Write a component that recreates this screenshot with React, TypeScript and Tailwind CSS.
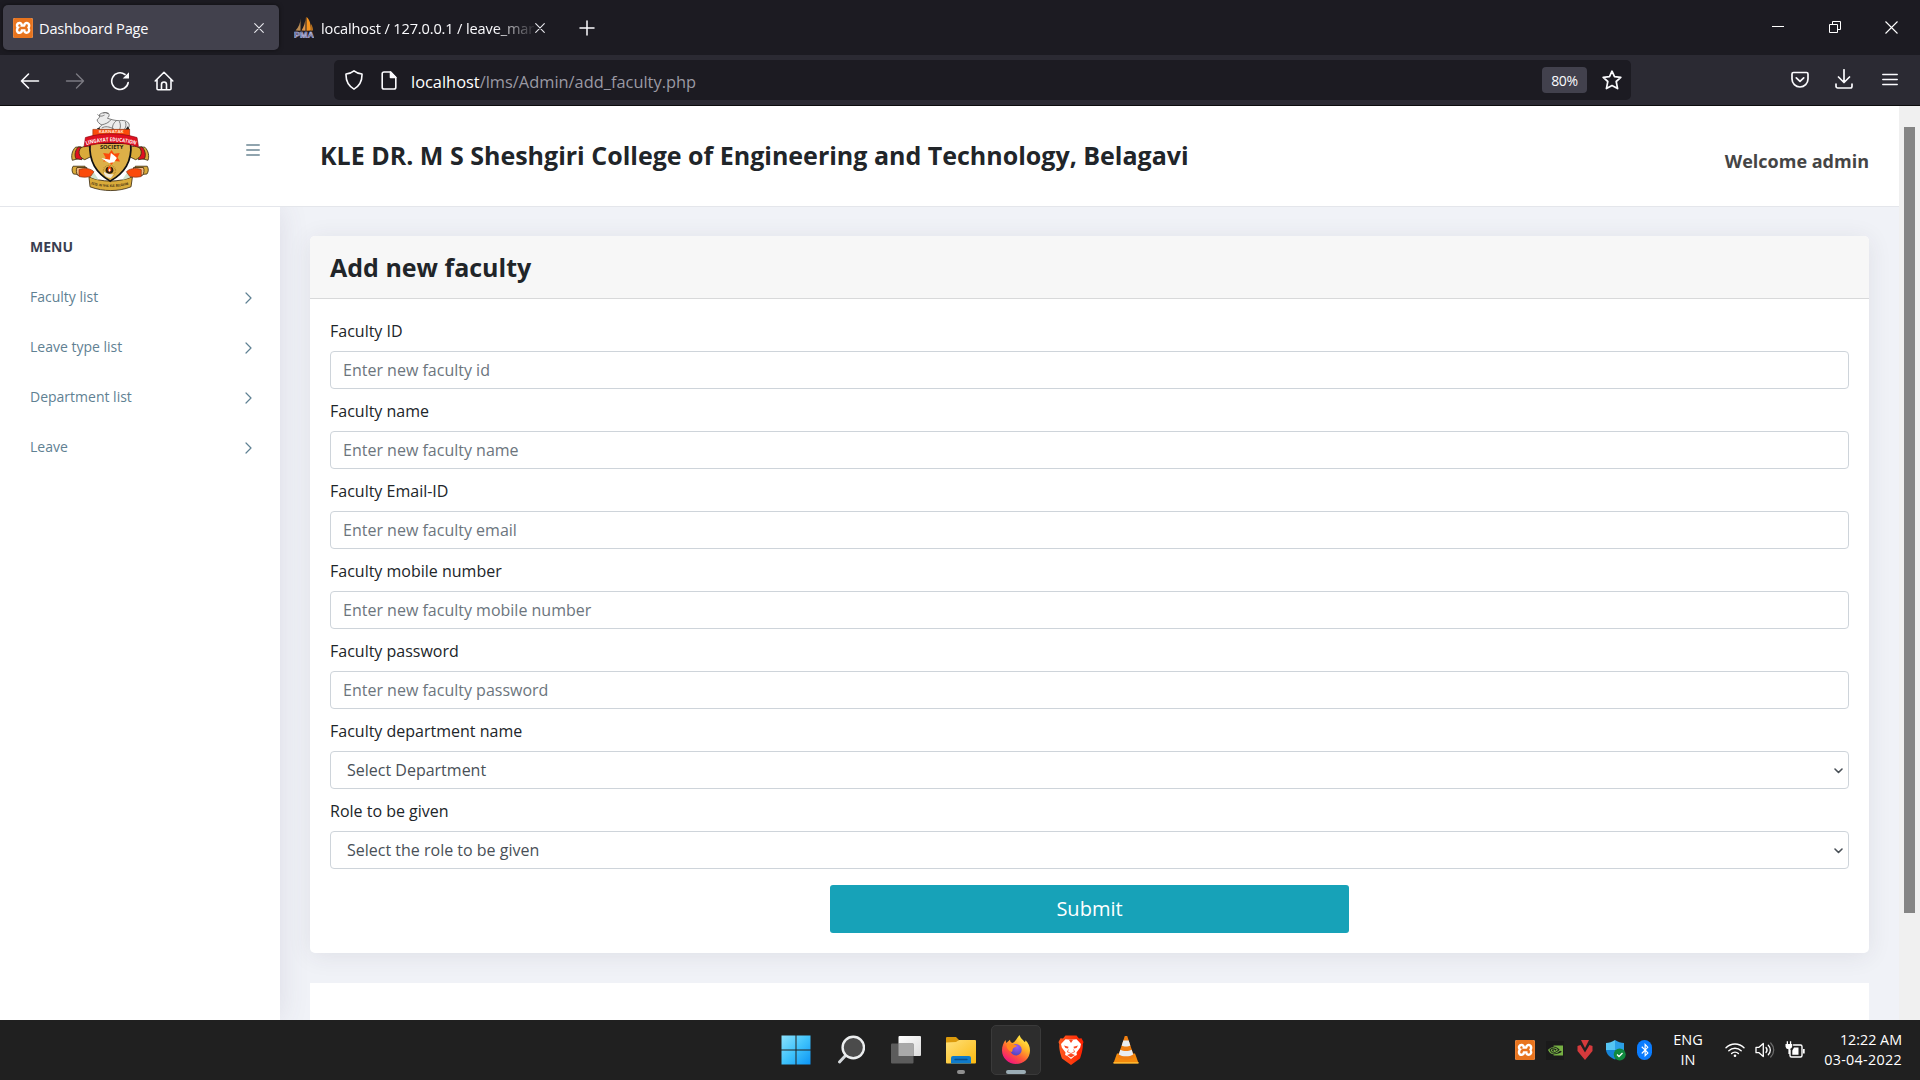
import React from "react";
import { SiXampp, SiNvidia } from "react-icons/si";
import { FaBluetoothB } from "react-icons/fa";

const stroke = {
  fill: "none",
  stroke: "currentColor",
  strokeLinecap: "round" as const,
  strokeLinejoin: "round" as const,
};

function Xampp() {
  return (
    <span className="flex h-[20px] w-[20px] shrink-0 items-center justify-center rounded-[2px] bg-white">
      <SiXampp size={20} color="#e8741e" />
    </span>
  );
}

function PhpMyAdmin() {
  return (
    <svg width="20" height="21" viewBox="0 0 20 21" className="shrink-0">
      <path d="M6.500 1.500C6.500 6 4.500 10.500 1.500 13.500l5 .2z" fill="#b98a52" />
      <path d="M11.500 0c0 5-1.500 10-4 13.500l4 .2z" fill="#d9924a" />
      <path d="M12.500 0c3.500 2.500 4.500 8.500 4.300 13.500l-4.300.2z" fill="#f7941e" />
      <path d="M17.300 7c1 2 1.500 4.500 1.400 6.500l-1.400.2z" fill="#f7941e" />
      <text x="0" y="20.500" fontSize="9" fontWeight="700" fill="#33356b" stroke="#c3c5e8" strokeWidth=".6" textLength="20" lengthAdjust="spacingAndGlyphs" fontFamily="Liberation Sans, sans-serif">
        PMA
      </text>
    </svg>
  );
}

function TabClose() {
  return (
    <svg width="10" height="10" viewBox="0 0 10 10" {...stroke} strokeWidth="1.1" className="shrink-0 text-[#e8e8ee]">
      <path d="M.7.7l8.600 8.600M9.300.7L.7 9.300" />
    </svg>
  );
}

function TabBar() {
  return (
    <div className="flex h-[55px] items-start bg-[#1c1b22] pt-[5px] pl-[3px] text-[#fbfbfe]">
      <div className="flex h-[45px] w-[276px] items-center rounded-[5px] bg-[#42414d] pl-[10px] shadow-[0_0_4px_rgba(0,0,0,0.5)]">
        <Xampp />
        <span className="ml-[6px] w-[215px] pt-[2px] text-[14.600px] tracking-[-0.200px]">Dashboard Page</span>
        <TabClose />
      </div>
      <div className="flex h-[45px] items-center pl-[15px]">
        <PhpMyAdmin />
        <span className="ml-[7px] w-[214px] pt-[2px] text-[14.600px] tracking-[-0.150px] whitespace-nowrap [mask-image:linear-gradient(to_right,black_81%,transparent_101%)]">
          localhost / 127.0.0.1 / leave_mar
        </span>
        <TabClose />
        <svg width="16" height="16" viewBox="0 0 16 16" {...stroke} strokeWidth="1.500" className="ml-[34px]">
          <path d="M8 1v14M1 8h14" />
        </svg>
      </div>
      <div className="mt-[14px] mr-[22px] ml-auto flex h-[16px] items-center">
        <svg width="12" height="12" viewBox="0 0 12 12" stroke="#fff">
          <path d="M0 5.500h12" />
        </svg>
        <svg width="12" height="12" viewBox="0 0 12 12" stroke="#fff" fill="none" className="ml-[45px]">
          <path d="M.5 3.500h8v8h-8zM3.500 3.500v-3h8v8h-3" />
        </svg>
        <svg width="13" height="13" viewBox="0 0 13 13" stroke="#fff" fill="none" className="ml-[44px]">
          <path d="M.5.5l12 12M12.500.5l-12 12" strokeWidth="1.100" />
        </svg>
      </div>
    </div>
  );
}

function Toolbar() {
  return (
    <div className="flex h-[51px] items-center border-b border-[#0c0c0d] bg-[#2b2a33] text-[#fbfbfe]">
      <div className="flex w-[334px] items-center pt-[1px] pl-[20px]">
        <svg width="20" height="20" viewBox="0 0 20 20" {...stroke} strokeWidth="1.600">
          <path d="M18.500 10H1.500M8.500 3l-7 7 7 7" />
        </svg>
        <svg width="20" height="20" viewBox="0 0 20 20" {...stroke} strokeWidth="1.400" className="ml-[25px] text-[#7b7a82]">
          <path d="M1.500 10h17M11.500 3l7 7-7 7" />
        </svg>
        <svg width="20" height="20" viewBox="0 0 20 20" {...stroke} strokeWidth="1.600" className="ml-[25px]">
          <path d="M18.200 11.500A8.300 8.300 0 1 1 15 3.500" />
          <path d="M19 1.200v6.300h-6.300z" fill="currentColor" stroke="none" />
        </svg>
        <svg width="20" height="20" viewBox="0 0 20 20" {...stroke} strokeWidth="1.600" className="ml-[24px]">
          <path d="M1.200 10L10 1.300 18.800 10M3 8.500v9.200a1 1 0 0 0 1 1h12a1 1 0 0 0 1-1V8.500M7.500 18.500v-5a2.500 2.500 0 0 1 5 0v5" />
        </svg>
      </div>
      <div className="flex h-[40px] w-[1297px] items-center rounded-[5px] bg-[#1c1b22] pl-[11px]">
        <svg width="18" height="20" viewBox="0 0 18 20" {...stroke} strokeWidth="1.600">
          <path d="M9 .9c2.300 1.900 4.800 2.900 8 3.100.2 6-1.500 11.500-8 15.100C2.500 15.500.8 10 1 4c3.200-.2 5.700-1.200 8-3.100z" />
        </svg>
        <svg width="16" height="19" viewBox="0 0 16 19" {...stroke} strokeWidth="1.600" className="ml-[18px]">
          <path d="M9.500 1H3a1.800 1.800 0 0 0-1.800 1.800v13.400A1.800 1.800 0 0 0 3 18h10a1.800 1.800 0 0 0 1.800-1.800V6.500z" />
          <path d="M9.500 1v5.500h5.300z" fill="currentColor" />
        </svg>
        <span className="ml-[14px] pt-[4px] text-[16.400px] text-[#9a99a3]">
          <span className="text-white">localhost</span>/lms/Admin/add_faculty.php
        </span>
        <span className="ml-auto flex h-[26px] w-[45px] items-center justify-center rounded-[4px] bg-[#42414d] pt-[1px] text-[14px] tracking-[-0.300px]">
          80%
        </span>
        <svg width="20" height="20" viewBox="0 0 20 20" {...stroke} strokeWidth="1.700" className="mr-[9px] ml-[15px]">
          <path d="M10 1.200l2.500 5.500 6.300.7-4.600 4.100 1.400 7.100L10 15.500l-5.600 3.100 1.400-7.100L1.200 7.400l6.300-.7z" />
        </svg>
      </div>
      <div className="mr-[22px] ml-auto flex items-center">
        <svg width="18" height="18" viewBox="0 0 18 18" {...stroke} strokeWidth="1.700">
          <path d="M2.500 1.500h13A1.500 1.500 0 0 1 17 3v5a8 8 0 0 1-16 0V3a1.500 1.500 0 0 1 1.500-1.500zM5.300 6.800L9 10.300l3.700-3.500" />
        </svg>
        <svg width="18" height="20" viewBox="0 0 18 20" {...stroke} strokeWidth="1.700" className="mb-[2px] ml-[26px]">
          <path d="M9 .8V13M3.500 8L9 13.500 14.500 8M1 15v2.300A1.700 1.700 0 0 0 2.700 19h12.600a1.700 1.700 0 0 0 1.700-1.700V15" />
        </svg>
        <svg width="16" height="14" viewBox="0 0 16 14" {...stroke} strokeWidth="1.500" className="mb-[2px] ml-[29px]">
          <path d="M.8 2.500h14.400M.8 7.500h14.400M.8 12.500h14.400" />
        </svg>
      </div>
    </div>
  );
}

function Crest() {
  return (
    <svg width="106" height="88" viewBox="0 1 300 282" preserveAspectRatio="none" fontFamily="Open Sans, sans-serif">
      <g fill="#ececec" stroke="#666" strokeWidth="2.500">
        <path d="M112 78c-3-8 2-12 6-16-6-4-13-10-13-17 6-5 8-9 7-17 7-6 15-8 25-4 4 6 2 12-3 16 10 4 21 8 34 8 16-3 28 4 28 15 0 8-5 13-10 15z" />
        <path d="M106 28c6 8 14 6 20 2M136 26c-5-4-10-5-14-2M117 62c12-4 20-6 28-18M150 78c-4-12 2-24 10-30M168 50c4 10 4 20 0 28M185 52c3 8 2 17-3 24M118 72c10-8 22-4 34 2" fill="none" />
      </g>
      <path d="M104 72l9-2-2 8zM192 66l6 12h-14z" fill="#222" />
      <g stroke="#3b2a10" strokeWidth="2.500">
        <path d="M44 133l16-1-3 36-22 7c-4-12-2-30 9-42z" fill="#d9ab3a" />
        <path d="M52 132l17 3-7 38-17-3c-5-12-2-28 7-38z" fill="#e01020" />
        <path d="M58 136c15-11 28-4 35 3l-5 24-18 10c-14-6-21-22-12-37z" fill="#d9ab3a" />
        <path d="M240 133l-16-1 3 36 22 7c4-12 2-30-9-42z" fill="#d9ab3a" />
        <path d="M232 132l-17 3 7 38 17-3c5-12 2-28-7-38z" fill="#e01020" />
        <path d="M226 136c-15-11-28-4-35 3l5 24 18 10c14-6 21-22 12-37z" fill="#d9ab3a" />
        <path d="M37 194h34v28l-33-3c-5-8-5-17-1-25z" fill="#d9ab3a" />
        <path d="M48 198h28v29l-26-4c-4-8-5-17-2-25z" fill="#f5bd87" />
        <path d="M247 194h-34v28l33-3c5-8 5-17 1-25z" fill="#d9ab3a" />
        <path d="M236 198h-28v29l26-4c4-8 5-17 2-25z" fill="#f5bd87" />
        <path d="M82 228l3 32c38 16 80 16 116 0l4-32c-38 18-88 18-123 0z" fill="#d9ab3a" />
      </g>
      <path d="M82 226c6 4 18 10 28 12l-14-24zM204 226c-6 4-18 10-28 12l14-24z" fill="#cfe3cf" />
      <path d="M85 120h115c5 60-18 95-58 122C103 215 81 180 85 120z" fill="#ddb048" stroke="#111" strokeWidth="5" />
      <path d="M54 205c18-7 35-3 42 7l-9 14c-10 4-22 4-33 1z" fill="#fb4b0b" stroke="#803010" strokeWidth="2" />
      <path d="M230 205c-18-7-35-3-42 7l9 14c10 4 22 4 33 1z" fill="#fb4b0b" stroke="#803010" strokeWidth="2" />
      <path d="M93 76h104v22H93z" fill="#fb4b0b" stroke="#a33208" strokeWidth="2" />
      <text x="145" y="89" fontSize="10" fontWeight="700" fill="#ffe2c8" textAnchor="middle" textLength="70" lengthAdjust="spacingAndGlyphs">
        KARNATAK
      </text>
      <path d="M72 102c46-16 98-16 146 0l4 30c-48-17-106-17-154 0z" fill="#e01020" stroke="#8a0a12" strokeWidth="2" />
      <path id="ribbon" d="M75 126c44-16 98-16 144 1" fill="none" />
      <text fontSize="17" fontWeight="700" fill="#fff">
        <textPath href="#ribbon" textLength="142" lengthAdjust="spacingAndGlyphs">
          LINGAYAT EDUCATION
        </textPath>
      </text>
      <text x="146" y="140" fontSize="14" fontWeight="700" fill="#26200c" textAnchor="middle" textLength="66" lengthAdjust="spacingAndGlyphs">
        SOCIETY
      </text>
      <path d="M146 142l7 12 16-2-6 14 7 13-16-2-8 13-8-13-16 2 7-13-7-14 16 2z" fill="#fb4b0b" />
      <path d="M117 168l24 5 3-21 12 10 5 6-8 13-14 3-10-7z" fill="#fff" />
      <circle cx="140" cy="208" r="17" fill="none" stroke="#a37c22" strokeWidth="4" strokeDasharray="2 3" />
      <circle cx="140" cy="207" r="11" fill="#2b1d0e" />
      <path d="M140 192c8 10 7 18 0 20-7-2-7-10 0-20z" fill="#fb4b0b" />
      <path d="M140 201c4 5 3 9 0 10-3-1-3-5 0-10z" fill="#fff" />
      <path d="M124 212c10 8 18 8 28 8l-8 12c-12-1-20-8-20-20z" fill="#f3ead8" />
      <path id="motto" d="M88 252c36 12 76 12 110-1" fill="none" />
      <text fontSize="11" fontWeight="700" fill="#3b2a10">
        <textPath href="#motto" textLength="108" lengthAdjust="spacingAndGlyphs">
          ESTD. IN 1916. KLE. BELGAUM
        </textPath>
      </text>
    </svg>
  );
}

function Header() {
  return (
    <header className="flex h-[101px] shrink-0 border-b border-[#e4e6eb] bg-white">
      <div className="flex w-[280px] pl-[60px]">
        <Crest />
        <svg width="14" height="12" viewBox="0 0 14 12" className="mt-[38px] ml-[80px]" stroke="#90a4ae" strokeWidth="2" strokeLinecap="round">
          <path d="M1 1h12M1 6h12M1 11h12" />
        </svg>
      </div>
      <h1 className="mt-[33px] ml-[40px] text-[25px] leading-[32px] font-bold text-[#212529]">
        KLE DR. M S Sheshgiri College of Engineering and Technology, Belagavi
      </h1>
      <div className="mt-[43px] mr-[30px] ml-auto text-[18px] leading-[24px] font-bold text-[#454545]">Welcome admin</div>
    </header>
  );
}

const menu = ["Faculty list", "Leave type list", "Department list", "Leave"];

function Sidebar() {
  return (
    <nav className="z-10 w-[280px] shrink-0 bg-white pt-[14px] pl-[30px] text-[14px] shadow-[0_0_28px_rgba(82,63,105,0.12)]">
      <div className="flex h-[50px] items-center font-bold text-[#3a3f51]">MENU</div>
      {menu.map((item) => (
        <a key={item} className="flex h-[50px] items-center justify-between pr-[28px] text-[#5f8193]">
          {item}
          <svg width="7" height="12" viewBox="0 0 7 12" {...stroke} strokeWidth="1.200" className="mt-[4px]">
            <path d="M1 1l5 5-5 5" />
          </svg>
        </a>
      ))}
    </nav>
  );
}

const fields = [
  ["Faculty ID", "Enter new faculty id"],
  ["Faculty name", "Enter new faculty name"],
  ["Faculty Email-ID", "Enter new faculty email"],
  ["Faculty mobile number", "Enter new faculty mobile number"],
  ["Faculty password", "Enter new faculty password"],
];

const selects = [
  ["Faculty department name", "Select Department"],
  ["Role to be given", "Select the role to be given"],
];

function FacultyForm() {
  return (
    <section className="h-[717px] shrink-0 rounded-[5px] bg-white text-[16px] text-[#212529] shadow-[0_3px_24px_rgba(50,40,70,0.090)]">
      <div className="h-[63px] rounded-t-[5px] border-b border-[#d8d9da] bg-[#f7f7f7] px-[20px] pt-[15px]">
        <h2 className="text-[25px] leading-[32px] font-bold">Add new faculty</h2>
      </div>
      <form className="flex flex-col px-[20px] pt-[20px]">
        {fields.map(([label, hint]) => (
          <div key={label} className="h-[80px]">
            <label className="block h-[32px] leading-[24px]">{label}</label>
            <input
              placeholder={hint}
              className="block h-[38px] w-full rounded-[4px] border border-[#ced4da] px-[12px] leading-[24px] placeholder:text-[#6c757d]"
            />
          </div>
        ))}
        {selects.map(([label, value]) => (
          <div key={label} className="h-[80px]">
            <label className="block h-[32px] leading-[24px]">{label}</label>
            <button type="button" className="flex h-[38px] w-full items-center justify-between rounded-[4px] border border-[#ced4da] pr-[5px] pl-[16px] text-[#495057]">
              {value}
              <svg width="9" height="6" viewBox="0 0 9 6" {...stroke} strokeWidth="1.600" className="mt-[1px]">
                <path d="M1 1l3.500 3.500L8 1" />
              </svg>
            </button>
          </div>
        ))}
        <button type="button" className="mt-[6px] h-[48px] w-[519px] self-center rounded-[3px] bg-[#17a2b8] text-[20px] text-white">
          Submit
        </button>
      </form>
    </section>
  );
}

function TaskIcon({ children, active, bar }: { children: React.ReactNode; active?: boolean; bar?: string }) {
  return (
    <div className={active ? "flex h-[50px] w-[50px] flex-col items-center rounded-[5px] border border-[#3a3a3a] bg-[#2d2d2d]" : "flex h-[50px] w-[50px] flex-col items-center border border-transparent"}>
      <div className="flex h-[44px] items-center pt-[4px]">{children}</div>
      {bar && <div className={bar} />}
    </div>
  );
}

function Taskbar() {
  return (
    <footer className="flex h-[60px] bg-[#202020] text-[#fff]">
      <div className="flex w-[1490px] gap-[5px] pt-[5px] pl-[771px]">
        <TaskIcon>
          <svg width="30" height="30" viewBox="0 0 30 30" className="-ml-[1px]">
            <defs>
              <linearGradient id="win" x1="0" y1="0" x2="30" y2="30" gradientUnits="userSpaceOnUse">
                <stop stopColor="#8fe3fd" />
                <stop offset=".5" stopColor="#40c3fb" />
                <stop offset="1" stopColor="#0a93f5" />
              </linearGradient>
            </defs>
            <path d="M.5.5h14v14H.5zM15.500.5h14v14h-14zM.5 15.500h14v14H.5zM15.500 15.500h14v14h-14z" fill="url(#win)" />
          </svg>
        </TaskIcon>
        <TaskIcon>
          <svg width="28" height="30" viewBox="0 0 28 30" className="-ml-[1px]">
            <path d="M9.500 19.500L2.500 27" stroke="#d5d9dc" strokeWidth="3" strokeLinecap="round" />
            <circle cx="16.300" cy="12.500" r="10.700" fill="#4b4b4b" stroke="#eceeef" strokeWidth="2.400" />
          </svg>
        </TaskIcon>
        <TaskIcon>
          <svg width="32" height="30" viewBox="0 0 32 30">
            <defs>
              <linearGradient id="pane" x1="0" y1="0" x2="1" y2="1">
                <stop stopColor="#fff" />
                <stop offset="1" stopColor="#dcdcdc" />
              </linearGradient>
            </defs>
            <rect x="8.500" y="1" width="22.500" height="20" rx="1" fill="url(#pane)" />
            <rect x="1" y="8.500" width="22.500" height="20" rx="1" fill="#5c5c5c" />
            <path d="M8.500 8.500h15V21h-15z" fill="#a9a9a9" />
          </svg>
        </TaskIcon>
        <TaskIcon bar="h-[4px] w-[8px] rounded-full bg-[#8f8f8f]">
          <svg width="32" height="30" viewBox="0 0 32 30">
            <defs>
              <linearGradient id="folder" x1="0" y1="0" x2="1" y2="1">
                <stop stopColor="#ffe07a" />
                <stop offset="1" stopColor="#fbb90f" />
              </linearGradient>
            </defs>
            <path d="M1 3a1 1 0 0 1 1-1h9l3 3-2 4H1z" fill="#dc9a0c" />
            <path d="M1 7.500l10-.5 3-2h16a1 1 0 0 1 1 1v21.500a1 1 0 0 1-1 1H2a1 1 0 0 1-1-1z" fill="url(#folder)" />
            <path d="M6 28.500V23a2 2 0 0 1 2-2h16a2 2 0 0 1 2 2v5.500z" fill="#0f7bcb" />
            <path d="M10 24.500h12" stroke="#0a4f8c" strokeWidth="1.300" strokeLinecap="round" />
          </svg>
        </TaskIcon>
        <TaskIcon active bar="h-[4px] w-[20px] rounded-full bg-[#9badb5]">
          <svg width="30" height="30" viewBox="0 0 30 30">
            <defs>
              <linearGradient id="fox" x1="24" y1="2" x2="7" y2="27" gradientUnits="userSpaceOnUse">
                <stop stopColor="#fff14a" />
                <stop offset=".35" stopColor="#ffb027" />
                <stop offset=".65" stopColor="#ff5a35" />
                <stop offset="1" stopColor="#f0147f" />
              </linearGradient>
              <radialGradient id="globe" cx=".6" cy=".25" r=".8">
                <stop stopColor="#9a5af5" />
                <stop offset="1" stopColor="#4b45b8" />
              </radialGradient>
            </defs>
            <path d="M18.500 0c1 3.500 3.500 4.500 5 7 .7-.3 1-.8 1-1.800 3 3 4.500 6.500 4.500 10.300C29 23.300 22.700 29 15 29S1 23 1 15.500c0-4 1.300-7.500 3.500-10.500l.8 3 3.700-3.300c.2 1.800 1 2.800 2.300 3.300 3-.8 4.200-4.500 7.200-8z" fill="url(#fox)" />
            <circle cx="15" cy="14.800" r="5.700" fill="url(#globe)" />
            <path d="M5.500 9.500c3-1.500 5-1 6.500 0 1.800.2 3 .5 4 1.500-1 1.500-3 1.300-4 2.500-.7 1-.2 2.500-1.200 3.500C7.500 16 5.500 13 5.500 9.500z" fill="#ff8a1e" />
          </svg>
        </TaskIcon>
        <TaskIcon>
          <svg width="28" height="32" viewBox="0 0 28 32">
            <defs>
              <linearGradient id="brave">
                <stop stopColor="#ff5a1f" />
                <stop offset="1" stopColor="#ff2000" />
              </linearGradient>
            </defs>
            <path d="M8.500 1.500h11l2.500 3 2.500-.3 2 3.800-.8 2.500c.5 3-1 9.500-2.700 14L14 31l-9-6.500C3.300 20 1.800 13.500 2.300 10.500L1.500 8l2-3.800 2.500.3z" fill="url(#brave)" />
            <path d="M14 5.800l5.500-.6L24 10l-.8 3.500-3.700 5 .4 2.500-2.700 1.300L14 25l-3.200-2.700L8.100 21l.4-2.500-3.700-5L4 10l4.500-4.800z" fill="#fff" />
            <path d="M7 11.500l4.500 1.200-.5 1.800-2.500-.5zM21 11.500l-4.500 1.200.5 1.800 2.500-.5zM11.500 14.500L10 18l3.200 1.500h1.600L18 18l-1.500-3.500L16.800 18 14 19l-2.800-1z" fill="#fb4a24" />
            <path d="M10 21l4-1.500 4 1.500-4 2.500zM12 6l2 3 2-3z" fill="#fb4a24" />
          </svg>
        </TaskIcon>
        <TaskIcon>
          <svg width="28" height="30" viewBox="0 0 28 30">
            <path d="M5 18.500h18l3.500 9.500h-25z" fill="#f58a0c" />
            <path d="M1.500 27h25v1.700h-25z" fill="#ffb52e" />
            <path d="M12.800 1h2.400l7 21c-3 3.500-13.400 3.500-16.400 0z" fill="#f07f12" />
            <path d="M11.300 5.500h5.400l1.600 5c-2 1.400-6.600 1.400-8.600 0zM8.300 14.800c3 1.600 8.400 1.600 11.400 0l1.500 4.600c-3.500 2.600-10.900 2.600-14.400 0z" fill="#e9edf1" />
          </svg>
        </TaskIcon>
      </div>
      <div className="flex h-[60px] grow items-center pl-[25px]">
        <Xampp />
        <span className="ml-[11px] flex h-[19px] w-[18px] items-center justify-center bg-[#1a1a1a]">
          <SiNvidia size={15} color="#76b043" />
        </span>
        <svg width="16" height="20" viewBox="0 0 16 20" className="ml-[13px]" fill="#d63a3c">
          <path d="M4 0h8L8 8zM.5 6l3-1L8 12.500 12.500 5l3 1v5L8 20 .5 11z" />
        </svg>
        <svg width="20" height="21" viewBox="0 0 20 21" className="ml-[13px]">
          <path d="M9 0c3 2 6 3 9 3v7H9z" fill="#2b9fe6" />
          <path d="M9 0C6 2 3 3 0 3v7h9z" fill="#55c5f3" />
          <path d="M0 10h9v9.500C4 17.500.5 14.500 0 10z" fill="#1583d6" />
          <path d="M18 10H9v9.500c5-2 8.500-5 9-9.500z" fill="#1067b8" />
          <circle cx="13.700" cy="14.500" r="6" fill="#10893e" />
          <path d="M11 14.500l2 2 3.500-3.500" stroke="#fff" strokeWidth="1.300" fill="none" />
        </svg>
        <span className="ml-[11px] flex h-[20px] w-[15px] items-center justify-center rounded-[8px] bg-[#0a7cff]">
          <FaBluetoothB size={14} color="#fff" />
        </span>
        <div className="ml-[17px] w-[38px] text-center text-[14.500px] leading-[20px]">
          ENG
          <br />
          IN
        </div>
        <svg width="20" height="16" viewBox="0 0 20 16" {...stroke} strokeWidth="1.400" className="ml-[18px]">
          <path d="M1 5.800a12.500 12.500 0 0 1 18 0M3.800 8.800a8.700 8.700 0 0 1 12.400 0M6.600 11.500a4.800 4.800 0 0 1 6.800 0" />
          <circle cx="10" cy="13.700" r="1.300" fill="currentColor" stroke="none" />
        </svg>
        <svg width="20" height="18" viewBox="0 0 20 18" {...stroke} strokeWidth="1.300" className="ml-[10px]">
          <path d="M1 6.300h3L8.300 2.500v13L4 11.700H1z" />
          <path d="M11 6.500c1.300 1.500 1.300 3.500 0 5M13.300 4.200c2.700 2.700 2.700 6.900 0 9.600" />
          <path d="M15.700 2c4 4 4 10 0 14" stroke="#6a6a6a" />
        </svg>
        <svg width="20" height="17" viewBox="0 0 20 17" {...stroke} strokeWidth="1.400" className="mb-[2px] ml-[10px]">
          <path d="M8.500 4h7A1.500 1.500 0 0 1 17 5.500v9a1.500 1.500 0 0 1-1.500 1.500h-9A1.500 1.500 0 0 1 5 14.500V9" />
          <path d="M18 8h1.700v4.500H18zM9 6.500h4.500v7.200H7.300V9.500zM.5 3h6.700v2.500a3 3 0 0 1-2.200 2.500v5H3.400V8.200a3 3 0 0 1-2.900-2.700zM1.700.2h1.300V3H1.700zM4.900.2h1.300V3H4.900z" fill="currentColor" stroke="none" />
        </svg>
        <div className="mr-[18px] ml-auto text-right text-[14.300px] leading-[20px]">
          <div>12:22 AM</div>
          <div className="tracking-[0.320px]">03-04-2022</div>
        </div>
      </div>
    </footer>
  );
}

export default function App() {
  return (
    <div className="flex h-[1080px] w-[1920px] flex-col overflow-hidden font-['Open_Sans',sans-serif]">
      <TabBar />
      <Toolbar />
      <div className="flex h-[914px]">
        <div className="flex w-[1899px] flex-col bg-[#f0f2f7]">
          <Header />
          <div className="flex h-[813px] overflow-hidden">
            <Sidebar />
            <main className="flex grow flex-col gap-[30px] px-[30px] pt-[29px]">
              <FacultyForm />
              <section className="h-[60px] shrink-0 bg-white" />
            </main>
          </div>
        </div>
        <div className="w-[21px] bg-[#f0f0f0] pt-[21px] pl-[5px]">
          <div className="h-[786px] w-[11px] bg-[#858585]" />
        </div>
      </div>
      <Taskbar />
    </div>
  );
}
